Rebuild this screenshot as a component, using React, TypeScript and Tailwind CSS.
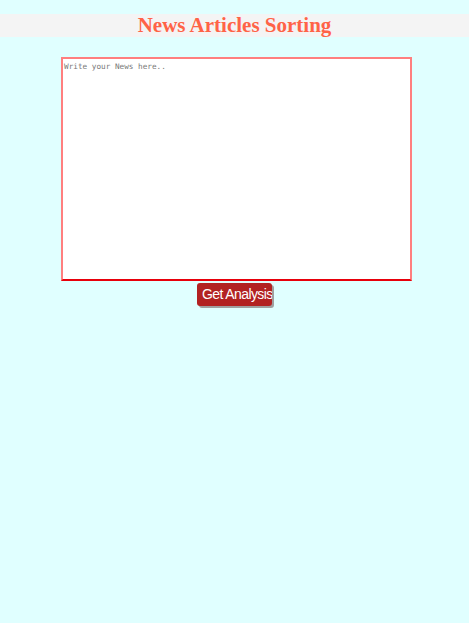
export default function App() {
  return (
    <div className="min-h-[623px] w-full bg-[#e0ffff] pt-[14px]">
      <h1 className="h-[23px] bg-[#f4f4f4] text-center font-['Liberation_Serif',serif] text-[21px] font-bold leading-[23px] text-[#ff6347]">
        News Articles Sorting
      </h1>
      <div className="mt-[20px] flex flex-col items-center">
        <textarea
          placeholder="Write your News here.."
          className="ml-[4px] h-[224px] w-[351px] resize-none border-2 border-[#ff7f7f] border-b-red-600 bg-white px-[1px] py-[2px] font-['DejaVu_Sans_Mono',monospace] text-[7.7px] outline-none placeholder:text-[#777]"
        />
        <button className="mt-[2px] h-[23px] w-[75px] overflow-hidden whitespace-nowrap rounded-[3px] bg-[#b22222] pl-[5px] text-left font-['Liberation_Sans',Arial,sans-serif] text-[14px] tracking-[-0.6px] text-white shadow-[2px_2px_0_#a0a0a0]">
          Get Analysis
        </button>
      </div>
    </div>
  );
}
